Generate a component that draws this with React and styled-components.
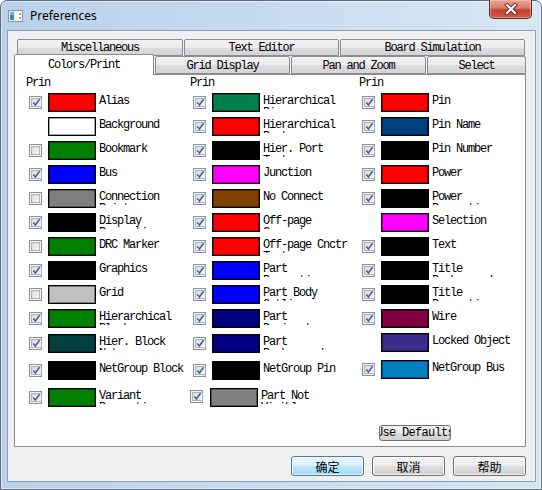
import React from 'react'
import styled, { createGlobalStyle } from 'styled-components'

const mono = `'Liberation Mono', 'Courier New', monospace`

const GlobalStyle = createGlobalStyle`
  html, body {
    margin: 0;
    padding: 0;
    background: #ffffff;
  }
  body {
    width: 542px;
    height: 490px;
    overflow: hidden;
  }
`

const Window = styled.div`
  box-sizing: border-box;
  width: 542px;
  height: 490px;
  display: flex;
  flex-direction: column;
  border: 1px solid #5b6b7d;
  border-radius: 7px 7px 0 0;
  background: linear-gradient(to right, #b9d1ea 0%, #c6daef 45%, #d9e6f4 100%);
  box-shadow: inset 0 0 0 1px rgba(255, 255, 255, 0.55);
`

const TitleBar = styled.div`
  height: 29px;
  display: flex;
  align-items: center;
  padding-left: 7px;
`

const TitleText = styled.span`
  margin-left: 7px;
  font-family: 'Noto Sans', 'Liberation Sans', sans-serif;
  font-size: 12px;
  color: #000;
`

const CloseBtn = styled.div`
  align-self: flex-start;
  margin: -1px 9px 0 auto;
  width: 43px;
  height: 19px;
  box-sizing: border-box;
  border: 1px solid #5a2a24;
  border-top: none;
  border-radius: 0 0 5px 5px;
  background: linear-gradient(#e7a295 0%, #d77a68 45%, #c4412d 55%, #cf5b43 100%);
  box-shadow: inset 0 0 0 1px rgba(255, 210, 200, 0.45);
  display: flex;
  align-items: center;
  justify-content: center;
`

const Client = styled.div`
  flex: 1;
  margin: 0 5px 7px 6px;
  border: 1px solid #8a9fb8;
  background: #f0f0f0;
  display: flex;
  flex-direction: column;
  padding: 8px 9px 5px 6px;
`

const TabRow = styled.div`
  display: flex;
  gap: 1px;
  height: ${(p) => p.$h}px;
  margin-left: ${(p) => p.$indent}px;
  align-items: flex-end;
`

const Tab = styled.div`
  box-sizing: border-box;
  width: ${(p) => p.$w}px;
  height: ${(p) => (p.$active ? 21 : p.$h)}px;
  margin-bottom: ${(p) => (p.$active ? -1 : 0)}px;
  position: ${(p) => (p.$active ? 'relative' : 'static')};
  z-index: ${(p) => (p.$active ? 1 : 'auto')};
  border: 1px solid #898c95;
  border-bottom: ${(p) => (p.$active ? 'none' : '1px solid #898c95')};
  border-radius: 2px 2px 0 0;
  background: ${(p) =>
    p.$active
      ? '#ffffff'
      : 'linear-gradient(#f3f3f3 0%, #ebebeb 50%, #dddddd 51%, #d3d3d3 100%)'};
  display: flex;
  align-items: center;
  justify-content: center;
  padding-top: ${(p) => (p.$active ? 0 : 1)}px;
  font-family: ${mono};
  font-size: 12px;
  letter-spacing: -1.2px;
  line-height: 12px;
  color: #000;
  white-space: nowrap;
`

const Panel = styled.div`
  box-sizing: border-box;
  height: 373px;
  border: 1px solid #898c95;
  background: #ffffff;
  display: grid;
  grid-template-columns: 164px 169px 1fr;
  padding: 2px 0 5px 11px;
`

const Column = styled.div`
  display: flex;
  flex-direction: column;
`

const Header = styled.div`
  font-family: ${mono};
  font-size: 12px;
  letter-spacing: -1.2px;
  line-height: 12px;
  height: 12px;
  color: #000;
`

const Row = styled.div`
  display: flex;
  align-items: flex-start;
  height: 19px;
  margin-top: ${(p) => p.$gap}px;
`

const BoxSlot = styled.div`
  width: 13px;
  height: 13px;
  margin: ${(p) => (p.$shift ? '2px 3px 0 0' : '3px 3px 0 3px')};
  flex-shrink: 0;
`

const Check = styled.div`
  box-sizing: border-box;
  width: 13px;
  height: 13px;
  border: 1px solid #8e8f8f;
  background: #f4f4f4;
  padding: 1px;
  display: flex;
`

const CheckInner = styled.div`
  flex: 1;
  border: 1px solid #aeb2b8;
  background: linear-gradient(135deg, #d6d8db 0%, #eeeff0 60%, #f8f8f8 100%);
  display: flex;
  align-items: center;
  justify-content: center;
`

const Swatch = styled.div`
  box-sizing: border-box;
  width: 48px;
  height: 19px;
  margin-left: ${(p) => (p.$shift ? 4 : 3)}px;
  flex-shrink: 0;
  border: 1px solid #000;
  box-shadow: inset 0 0 0 1px rgba(0, 0, 0, 0.35);
  background: ${(p) => p.$color};
`

const Label = styled.div`
  width: 88px;
  height: 14px;
  margin: 2px 0 0 3px;
  overflow: hidden;
  font-family: ${mono};
  font-size: 12px;
  letter-spacing: -1.2px;
  line-height: 12px;
  color: #000;
  word-wrap: break-word;
`

const DefaultsBtn = styled.div`
  box-sizing: border-box;
  margin: auto 0 0 20px;
  width: 72px;
  height: 16px;
  border: 1px solid #707070;
  border-radius: 3px;
  background: linear-gradient(#f2f2f2 0%, #ebebeb 50%, #dddddd 51%, #cfcfcf 100%);
  display: flex;
  align-items: center;
  justify-content: center;
  overflow: hidden;
  font-family: ${mono};
  font-size: 12px;
  letter-spacing: -0.7px;
  line-height: 12px;
  white-space: nowrap;
  color: #000;
`

const ButtonRow = styled.div`
  display: flex;
  justify-content: flex-end;
  gap: 8px;
  margin-top: 9px;
`

const DlgButton = styled.div`
  box-sizing: border-box;
  width: 73px;
  height: 20px;
  border: 1px solid ${(p) => (p.$primary ? '#3c7fb1' : '#707070')};
  border-radius: 3px;
  background: ${(p) =>
    p.$primary
      ? 'linear-gradient(#eaf6fd 0%, #d9f0fc 50%, #bee6fd 51%, #a7d9f5 100%)'
      : 'linear-gradient(#f2f2f2 0%, #ebebeb 50%, #dddddd 51%, #cfcfcf 100%)'};
  box-shadow: inset 0 0 0 1px rgba(255, 255, 255, 0.75);
  display: flex;
  align-items: center;
  justify-content: center;
  font-family: 'Noto Sans CJK SC', 'Noto Sans', sans-serif;
  font-size: 12px;
  color: #000;
`

const col1 = [
  { label: 'Alias', color: '#ff0000', check: true },
  { label: 'Background', color: '#ffffff', check: null },
  { label: 'Bookmark', color: '#008000', check: false },
  { label: 'Bus', color: '#0000ff', check: true },
  { label: 'Connection Points', color: '#808080', check: false },
  { label: 'Display Properties', color: '#000000', check: true },
  { label: 'DRC Marker', color: '#008000', check: false },
  { label: 'Graphics', color: '#000000', check: true },
  { label: 'Grid', color: '#c0c0c0', check: false },
  { label: 'Hierarchical Block', color: '#008000', check: true },
  { label: 'Hier. Block Net', color: '#004040', check: true, gap: 6 },
  { label: 'NetGroup Block', color: '#000000', check: true, gap: 8 },
  { label: 'Variant Properties', color: '#008000', check: true, gap: 8 },
]

const col2 = [
  { label: 'Hierarchical Pin', color: '#00804a', check: true },
  { label: 'Hierarchical Port', color: '#ff0000', check: true },
  { label: 'Hier. Port Text', color: '#000000', check: true },
  { label: 'Junction', color: '#ff00ff', check: true },
  { label: 'No Connect', color: '#804000', check: true },
  { label: 'Off-page Connector', color: '#ff0000', check: true },
  { label: 'Off-page Cnctr Text', color: '#ff0000', check: true },
  { label: 'Part Properties', color: '#0000ff', check: true },
  { label: 'Part Body Outline', color: '#0000ff', check: true },
  { label: 'Part Designator', color: '#000080', check: true },
  { label: 'Part Background', color: '#000080', check: true, gap: 6 },
  { label: 'NetGroup Pin', color: '#000000', check: true, gap: 8 },
  { label: 'Part Not Visible', color: '#808080', check: true, gap: 8, shift: true },
]

const col3 = [
  { label: 'Pin', color: '#ff0000', check: true },
  { label: 'Pin Name', color: '#004080', check: true },
  { label: 'Pin Number', color: '#000000', check: true },
  { label: 'Power', color: '#ff0000', check: true },
  { label: 'Power Properties', color: '#000000', check: true },
  { label: 'Selection', color: '#ff00ff', check: null },
  { label: 'Text', color: '#000000', check: true },
  { label: 'Title Background', color: '#000000', check: true },
  { label: 'Title Properties', color: '#000000', check: true },
  { label: 'Wire', color: '#800040', check: true },
  { label: 'Locked Object', color: '#392c8a', check: null },
  { label: 'NetGroup Bus', color: '#0080c0', check: true, gap: 8 },
]

function WindowIcon() {
  return (
    <svg width="15" height="14" viewBox="0 0 15 14">
      <rect x="0.5" y="1.5" width="14" height="11" fill="#eef2f6" stroke="#8696a8" />
      <rect x="2" y="3" width="4" height="8" fill="#3f8f9a" />
      <rect x="2" y="3" width="4" height="3" fill="#6fb3c0" />
      <rect x="7" y="3" width="6" height="8" fill="#ffffff" />
      <rect x="11" y="4" width="2" height="2" fill="#9aa6b2" />
      <rect x="11" y="8" width="2" height="2" fill="#9aa6b2" />
    </svg>
  )
}

function CloseGlyph() {
  return (
    <svg width="14" height="12" viewBox="0 0 14 12">
      <path d="M3 2 L11 10 M11 2 L3 10" stroke="#5a2a24" strokeWidth="4" strokeLinecap="square" />
      <path d="M3 2 L11 10 M11 2 L3 10" stroke="#ffffff" strokeWidth="2.2" strokeLinecap="square" />
    </svg>
  )
}

function CheckMark() {
  return (
    <svg width="9" height="9" viewBox="0 0 9 9" style={{ overflow: 'visible' }}>
      <path d="M1.3 4.4 L3.4 6.9 L7.6 1.2" fill="none" stroke="#4a5d9c" strokeWidth="1.6" />
    </svg>
  )
}

function ColorRow({ item, gap }) {
  return (
    <Row $gap={gap}>
      <BoxSlot $shift={item.shift}>
        {item.check !== null && (
          <Check>
            <CheckInner>{item.check && <CheckMark />}</CheckInner>
          </Check>
        )}
      </BoxSlot>
      <Swatch $color={item.color} $shift={item.shift} />
      <Label>{item.label}</Label>
    </Row>
  )
}

function ColorColumn({ items, children }) {
  return (
    <Column>
      <Header>Prin</Header>
      {items.map((item, i) => (
        <ColorRow key={i} item={item} gap={i === 0 ? 4 : item.gap ?? 5} />
      ))}
      {children}
    </Column>
  )
}

export default function App() {
  return (
    <>
      <GlobalStyle />
      <Window>
        <TitleBar>
          <WindowIcon />
          <TitleText>Preferences</TitleText>
          <CloseBtn>
            <CloseGlyph />
          </CloseBtn>
        </TitleBar>
        <Client>
          <TabRow $h={17} $indent={3}>
            <Tab $w={166} $h={17}>Miscellaneous</Tab>
            <Tab $w={155} $h={17}>Text Editor</Tab>
            <Tab $w={185} $h={17}>Board Simulation</Tab>
          </TabRow>
          <TabRow $h={18} $indent={0}>
            <Tab $w={140} $active>Colors/Print</Tab>
            <Tab $w={135} $h={18}>Grid Display</Tab>
            <Tab $w={135} $h={18}>Pan and Zoom</Tab>
            <Tab $w={99} $h={18}>Select</Tab>
          </TabRow>
          <Panel>
            <ColorColumn items={col1} />
            <ColorColumn items={col2} />
            <ColorColumn items={col3}>
              <DefaultsBtn>Use Defaults</DefaultsBtn>
            </ColorColumn>
          </Panel>
          <ButtonRow>
            <DlgButton $primary>确定</DlgButton>
            <DlgButton>取消</DlgButton>
            <DlgButton>帮助</DlgButton>
          </ButtonRow>
        </Client>
      </Window>
    </>
  )
}
